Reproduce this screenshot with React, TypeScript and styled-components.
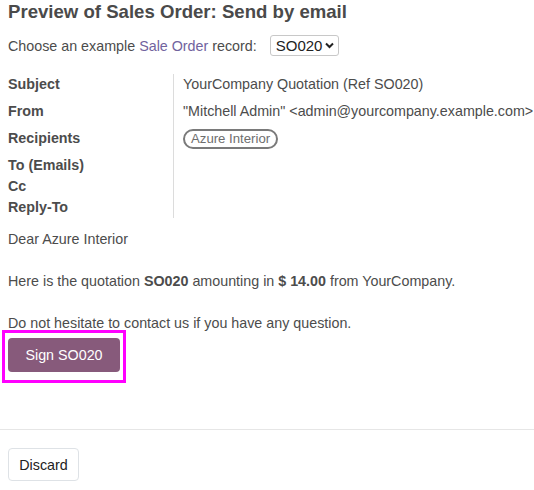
import React from "react";
import styled, { createGlobalStyle } from "styled-components";

const Global = createGlobalStyle`
  html, body { margin: 0; padding: 0; background: #fff; }
  body { font-family: "Liberation Sans", Arial, sans-serif; color: #4c4c4c; font-size: 14.3px; }
`;

const Page = styled.div`
  width: 534px;
  height: 490px;
  display: flex;
  flex-direction: column;
  overflow: hidden;
`;

const Body = styled.div`
  padding: 0 8px;
  flex: 1;
`;

const Title = styled.h1`
  margin: 0;
  padding-top: 1px;
  font-size: 18.6px;
  font-weight: bold;
  line-height: 22px;
  color: #4a4a4a;
`;

const ChooseRow = styled.div`
  margin-top: 12px;
  display: flex;
  align-items: center;
  height: 21px;
`;

const Link = styled.span`
  color: #71639e;
`;

const Select = styled.div`
  margin-left: 13px;
  height: 21px;
  width: 69px;
  box-sizing: border-box;
  border: 1px solid #c8c8c8;
  border-radius: 3px;
  display: flex;
  align-items: center;
  padding-left: 5px;
  gap: 3px;
  color: #222;
  font-size: 15px;
`;

const Grid = styled.div`
  margin-top: 18px;
  display: grid;
  grid-template-columns: 165px 1fr;
`;

const Labels = styled.div`
  display: flex;
  flex-direction: column;
  padding-top: 1px;
`;

const Label = styled.div<{ $h: number }>`
  height: ${(p) => p.$h}px;
  font-weight: bold;
  line-height: 18px;
  white-space: nowrap;
`;

const Values = styled.div`
  border-left: 1px solid #dcdcdc;
  padding-left: 9px;
  height: 144px;
  padding-top: 1px;
  display: flex;
  flex-direction: column;
  box-sizing: border-box;
`;

const Value = styled.div<{ $h: number }>`
  height: ${(p) => p.$h}px;
  line-height: 18px;
  white-space: nowrap;
`;

const Tag = styled.span`
  display: inline-block;
  box-sizing: border-box;
  height: 20px;
  border: 2px solid #7a7a7a;
  border-radius: 10px;
  padding: 0 6px 0 6px;
  font-size: 13.2px;
  line-height: 16px;
  color: #6e6e6e;
  margin-top: 0;
`;

const Para = styled.p<{ $mt: number }>`
  margin: ${(p) => p.$mt}px 0 0 0;
  line-height: 18px;
`;

const Highlight = styled.div`
  margin: -2px 0 0 -6px;
  width: 124px;
  height: 53px;
  box-sizing: border-box;
  border: 3px solid #ff00ff;
  padding: 5px 0 0 3px;
`;

const SignButton = styled.div`
  width: 112px;
  height: 34px;
  border-radius: 4px;
  background: #875a7b;
  color: #fff;
  display: flex;
  align-items: center;
  justify-content: center;
  font-size: 14.3px;
`;

const Footer = styled.div`
  box-sizing: border-box;
  border-top: 1px solid #e6e6e6;
  padding: 18px 8px 0 8px;
  height: 61px;
`;

const Discard = styled.div`
  width: 71px;
  height: 33px;
  box-sizing: border-box;
  border: 1px solid #dee2e6;
  border-radius: 4px;
  display: flex;
  align-items: center;
  justify-content: center;
  color: #222;
  font-size: 14.3px;
`;

export default function App() {
  return (
    <Page>
      <Global />
      <Body>
        <Title>Preview of Sales Order: Send by email</Title>
        <ChooseRow>
          Choose an example&nbsp;<Link>Sale Order</Link>&nbsp;record:
          <Select>
            SO020
            <svg width="9" height="7" viewBox="0 0 9 7">
              <path d="M1 1.5 L4.5 5 L8 1.5" fill="none" stroke="#222" strokeWidth="2" />
            </svg>
          </Select>
        </ChooseRow>
        <Grid>
          <Labels>
            <Label $h={27}>Subject</Label>
            <Label $h={27}>From</Label>
            <Label $h={27}>Recipients</Label>
            <Label $h={21}>To (Emails)</Label>
            <Label $h={21}>Cc</Label>
            <Label $h={21}>Reply-To</Label>
          </Labels>
          <Values>
            <Value $h={27}>YourCompany Quotation (Ref SO020)</Value>
            <Value $h={27}>"Mitchell Admin" &lt;admin@yourcompany.example.com&gt;</Value>
            <Value $h={27}>
              <Tag>Azure Interior</Tag>
            </Value>
          </Values>
        </Grid>
        <Para $mt={11}>Dear Azure Interior</Para>
        <Para $mt={24}>
          Here is the quotation <b>SO020</b> amounting in <b>$ 14.00</b> from YourCompany.
        </Para>
        <Para $mt={24}>Do not hesitate to contact us if you have any question.</Para>
        <Highlight>
          <SignButton>Sign SO020</SignButton>
        </Highlight>
      </Body>
      <Footer>
        <Discard>Discard</Discard>
      </Footer>
    </Page>
  );
}
